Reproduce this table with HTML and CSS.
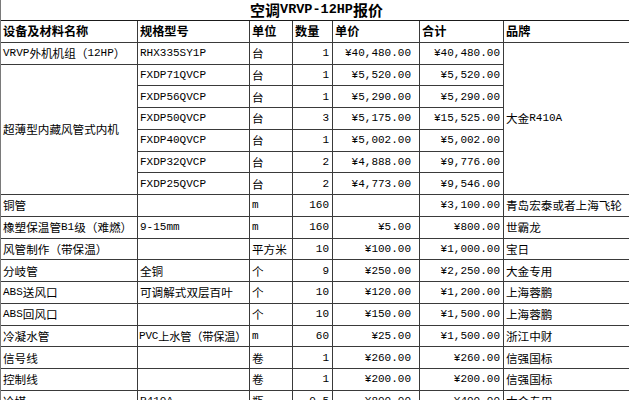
FILE: index.html
```html
<!DOCTYPE html>
<html lang="zh-CN">
<head>
<meta charset="utf-8">
<title>空调VRVP-12HP报价</title>
<link rel="stylesheet" href="styles.css">
</head>
<body>
<div class="sheet">
  <div class="title"><span>空调</span><span class="tl">VRVP-12HP</span><span>报价</span></div>
  <div class="grid">
    <div class="c h">设备及材料名称</div>
    <div class="c h">规格型号</div>
    <div class="c h">单位</div>
    <div class="c h">数量</div>
    <div class="c h">单价</div>
    <div class="c h">合计</div>
    <div class="c h">品牌</div>

    <div class="c"><span class="m">VRVP</span>外机机组（<span class="m">12HP</span>）</div>
    <div class="c m">RHX335SY1P</div>
    <div class="c">台</div>
    <div class="c r m">1</div>
    <div class="c r p m">¥40,480.00</div>
    <div class="c r m">¥40,480.00</div>
    <div class="c brand">大金<span class="m">R410A</span></div>

    <div class="c inner">超薄型内藏风管式内机</div>
    <div class="c m">FXDP71QVCP</div>
    <div class="c">台</div>
    <div class="c r m">1</div>
    <div class="c r p m">¥5,520.00</div>
    <div class="c r m">¥5,520.00</div>

    <div class="c m">FXDP56QVCP</div>
    <div class="c">台</div>
    <div class="c r m">1</div>
    <div class="c r p m">¥5,290.00</div>
    <div class="c r m">¥5,290.00</div>

    <div class="c m">FXDP50QVCP</div>
    <div class="c">台</div>
    <div class="c r m">3</div>
    <div class="c r p m">¥5,175.00</div>
    <div class="c r m">¥15,525.00</div>

    <div class="c m">FXDP40QVCP</div>
    <div class="c">台</div>
    <div class="c r m">1</div>
    <div class="c r p m">¥5,002.00</div>
    <div class="c r m">¥5,002.00</div>

    <div class="c m">FXDP32QVCP</div>
    <div class="c">台</div>
    <div class="c r m">2</div>
    <div class="c r p m">¥4,888.00</div>
    <div class="c r m">¥9,776.00</div>

    <div class="c m">FXDP25QVCP</div>
    <div class="c">台</div>
    <div class="c r m">2</div>
    <div class="c r p m">¥4,773.00</div>
    <div class="c r m">¥9,546.00</div>

    <div class="c">铜管</div>
    <div class="c"></div>
    <div class="c m">m</div>
    <div class="c r m">160</div>
    <div class="c r p m"></div>
    <div class="c r m">¥3,100.00</div>
    <div class="c">青岛宏泰或者上海飞轮</div>

    <div class="c">橡塑保温管<span class="m">B1</span>级（难燃）</div>
    <div class="c m">9-15mm</div>
    <div class="c m">m</div>
    <div class="c r m">160</div>
    <div class="c r p m">¥5.00</div>
    <div class="c r m">¥800.00</div>
    <div class="c">世霸龙</div>

    <div class="c">风管制作（带保温）</div>
    <div class="c"></div>
    <div class="c">平方米</div>
    <div class="c r m">10</div>
    <div class="c r p m">¥100.00</div>
    <div class="c r m">¥1,000.00</div>
    <div class="c">宝日</div>

    <div class="c">分岐管</div>
    <div class="c">全铜</div>
    <div class="c">个</div>
    <div class="c r m">9</div>
    <div class="c r p m">¥250.00</div>
    <div class="c r m">¥2,250.00</div>
    <div class="c">大金专用</div>

    <div class="c"><span class="m">ABS</span>送风口</div>
    <div class="c">可调解式双层百叶</div>
    <div class="c">个</div>
    <div class="c r m">10</div>
    <div class="c r p m">¥120.00</div>
    <div class="c r m">¥1,200.00</div>
    <div class="c">上海蓉鹏</div>

    <div class="c"><span class="m">ABS</span>回风口</div>
    <div class="c"></div>
    <div class="c">个</div>
    <div class="c r m">10</div>
    <div class="c r p m">¥150.00</div>
    <div class="c r m">¥1,500.00</div>
    <div class="c">上海蓉鹏</div>

    <div class="c">冷凝水管</div>
    <div class="c tight"><span class="m">PVC</span>上水管（带保温）</div>
    <div class="c m">m</div>
    <div class="c r m">60</div>
    <div class="c r p m">¥25.00</div>
    <div class="c r m">¥1,500.00</div>
    <div class="c">浙江中财</div>

    <div class="c">信号线</div>
    <div class="c"></div>
    <div class="c">卷</div>
    <div class="c r m">1</div>
    <div class="c r p m">¥260.00</div>
    <div class="c r m">¥260.00</div>
    <div class="c">信强国标</div>

    <div class="c">控制线</div>
    <div class="c"></div>
    <div class="c">卷</div>
    <div class="c r m">1</div>
    <div class="c r p m">¥200.00</div>
    <div class="c r m">¥200.00</div>
    <div class="c">信强国标</div>

    <div class="c">冷媒</div>
    <div class="c m">R410A</div>
    <div class="c">瓶</div>
    <div class="c r m">0.5</div>
    <div class="c r p m">¥800.00</div>
    <div class="c r m">¥400.00</div>
    <div class="c">大金专用</div>
  </div>
</div>
</body>
</html>
```

FILE: styles.css
```css
html, body {
  margin: 0;
  padding: 0;
  background: #ffffff;
  overflow: hidden;
}

.sheet {
  width: 629px;
  border-left: 1px solid #7a7a7a;
  color: #000;
  font-family: "Noto Sans CJK SC", sans-serif;
}

.title {
  height: 20px;
  display: flex;
  align-items: center;
  justify-content: center;
  font-size: 15px;
  font-weight: 700;
  line-height: 16px;
  padding-left: 2px;
}

.title .tl {
  font-family: "Liberation Mono", monospace;
  font-size: 13.5px;
  font-weight: 700;
}

.grid {
  display: grid;
  grid-template-columns: 137px 112px 43px 40px 87px 84px 126px;
  grid-template-rows: repeat(18, 21.75px);
  border-top: 1px solid #1a1a1a;
}

.c {
  box-sizing: border-box;
  border-right: 1px solid #3a3a3a;
  border-bottom: 1px solid #3a3a3a;
  display: flex;
  align-items: center;
  padding: 0 2px;
  font-size: 11.6px;
  line-height: 14px;
  white-space: nowrap;
  overflow: hidden;
}

.h {
  font-weight: 700;
  font-size: 12.2px;
}

.m {
  font-family: "Liberation Mono", monospace;
  font-size: 11px;
}

.r {
  justify-content: flex-end;
  padding-right: 3px;
}

.p {
  padding-right: 8px;
}

.tight {
  padding: 0 0 0 1px;
  font-size: 11.2px;
  letter-spacing: -0.2px;
}

.inner {
  grid-row: span 6;
}

.brand {
  grid-row: span 7;
}
```
